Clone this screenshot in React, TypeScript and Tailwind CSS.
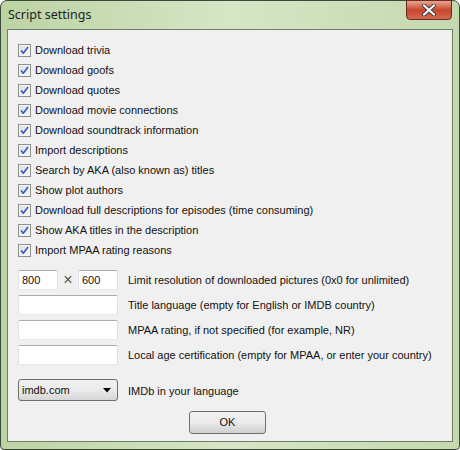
import React from 'react';

const checks = [
  'Download trivia',
  'Download goofs',
  'Download quotes',
  'Download movie connections',
  'Download soundtrack information',
  'Import descriptions',
  'Search by AKA (also known as) titles',
  'Show plot authors',
  'Download full descriptions for episodes (time consuming)',
  'Show AKA titles in the description',
  'Import MPAA rating reasons',
];

function CheckBox() {
  return (
    <span className="w-[13px] h-[13px] border border-[#8e8f8f] bg-gradient-to-br from-[#dcdcdc] to-[#fbfbfb] flex items-center justify-center shrink-0">
      <span className="w-[11px] h-[11px] border border-[#f4f4f4] flex items-center justify-center">
        <svg width="9" height="9" viewBox="0 0 9 9">
          <path d="M1 4.5 L3.3 7.2 L8 1" fill="none" stroke="#2f5bc0" strokeWidth="1.6" strokeLinejoin="round" />
        </svg>
      </span>
    </span>
  );
}

function TextBox({ value, w }: { value?: string; w: string }) {
  return (
    <div className={`${w} h-[20px] bg-white border border-[#abadb3] border-t-[#abadb3] border-b-[#e3e9ef] border-r-[#dbdfe6] border-l-[#e2e3ea] rounded-[2px] pl-[3px] flex items-center text-[11px]`}>
      {value}
    </div>
  );
}

export default function App() {
  return (
    <div
      className="w-[460px] h-[450px] rounded-t-[7px] rounded-b-[4px] border border-[#3c4a3a] bg-gradient-to-r from-[#bcd3a3] via-[#d7e6c6] to-[#c4d9ae] flex flex-col relative text-[#111]"
      style={{ fontFamily: '"Liberation Sans", Arial, sans-serif' }}
    >
      <div className="h-[28px] flex items-center pl-[7px] text-[12.5px] text-[#1e1e1e]" style={{ fontFamily: '"Noto Sans", "Open Sans", sans-serif' }}>
        Script settings
      </div>
      <div className="absolute right-[7px] top-[-1px] w-[46px] h-[20px] rounded-b-[4px] border border-[#6a2a20] bg-gradient-to-b from-[#e8a493] via-[#c7452c] to-[#d2694e] flex items-center justify-center">
        <svg width="14" height="12" viewBox="0 0 14 12">
          <path d="M2 1.5 L12 10.5 M12 1.5 L2 10.5" stroke="#3a3a3a" strokeWidth="4" strokeLinecap="round" />
          <path d="M2 1.5 L12 10.5 M12 1.5 L2 10.5" stroke="#ffffff" strokeWidth="2.2" strokeLinecap="round" />
        </svg>
      </div>
      <div className="mx-[6px] h-[413px] border border-[#6e7d69] bg-[#f0f0f0] flex flex-col pl-[10px] pt-[10px] text-[11px]">
        <div className="flex flex-col">
          {checks.map((c) => (
            <div key={c} className="h-[20px] flex items-center gap-[4px]">
              <CheckBox />
              <span>{c}</span>
            </div>
          ))}
        </div>
        <div className="flex flex-col gap-[5px] mt-[10px]">
          <div className="flex items-center">
            <TextBox value="800" w="w-[40px]" />
            <span className="w-[20px] text-center text-[16px] font-light leading-none text-[#555]">×</span>
            <TextBox value="600" w="w-[40px]" />
            <span className="ml-[10px]">Limit resolution of downloaded pictures (0x0 for unlimited)</span>
          </div>
          <div className="flex items-center">
            <TextBox w="w-[100px]" />
            <span className="ml-[10px]">Title language (empty for English or IMDB country)</span>
          </div>
          <div className="flex items-center">
            <TextBox w="w-[100px]" />
            <span className="ml-[10px]">MPAA rating, if not specified (for example, NR)</span>
          </div>
          <div className="flex items-center">
            <TextBox w="w-[100px]" />
            <span className="ml-[10px]">Local age certification (empty for MPAA, or enter your country)</span>
          </div>
        </div>
        <div className="flex items-center mt-[14px]">
          <div className="w-[100px] h-[22px] border border-[#707070] rounded-[3px] bg-gradient-to-b from-[#f2f2f2] via-[#ebebeb] to-[#d6d6d6] flex items-center justify-between pl-[3px] pr-[6px]">
            <span>imdb.com</span>
            <svg width="8" height="5" viewBox="0 0 8 5">
              <path d="M0 0 H8 L4 4.5 Z" fill="#000" />
            </svg>
          </div>
          <span className="ml-[10px] mt-[2px]">IMDb in your language</span>
        </div>
        <div className="flex justify-center mt-[10px] pr-[15px]">
          <div className="w-[77px] h-[23px] border border-[#707070] rounded-[3px] bg-gradient-to-b from-[#f2f2f2] via-[#ebebeb] to-[#cfcfcf] flex items-center justify-center">
            OK
          </div>
        </div>
      </div>
    </div>
  );
}
